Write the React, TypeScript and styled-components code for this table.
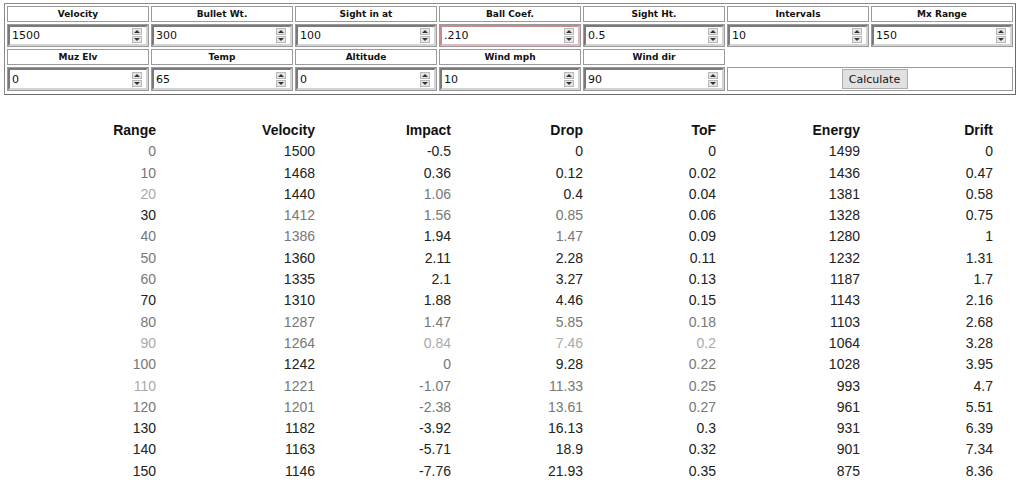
import React from "react";
import styled, { createGlobalStyle } from "styled-components";

const GlobalStyle = createGlobalStyle`
  body {
    margin: 0;
    background: #fff;
    font-family: "DejaVu Sans", Verdana, sans-serif;
  }
`;

const Page = styled.div`
  padding: 3px 0 0 4px;
`;

const FormTable = styled.div`
  width: 1006px;
  display: grid;
  grid-template-columns: repeat(7, 142px);
  grid-template-rows: 16px 23px 16px 24px;
  gap: 2px;
  padding: 2px 2px 3px 2px;
  border: 1px solid #8a8a8a;
  border-right-color: #6a6a6a;
  border-bottom-color: #6a6a6a;
`;

const HeadCell = styled.div<{ $empty?: boolean }>`
  box-sizing: border-box;
  border: 1px solid ${(p) => (p.$empty ? "transparent" : "#9a9a9a")};
  font-weight: bold;
  font-size: 9px;
  color: #111;
  display: flex;
  align-items: center;
  justify-content: center;
`;

const InputCell = styled.div`
  box-sizing: border-box;
  min-width: 0;
  border: 1px solid #9a9a9a;
  display: flex;
`;

const InputBox = styled.div<{ $invalid?: boolean }>`
  flex: 1;
  min-width: 0;
  display: flex;
  align-items: center;
  border: 2px solid;
  border-color: ${(p) =>
    p.$invalid ? "#c98a8f #e2b9bc #e2b9bc #c98a8f" : "#7a7a7a #d4d4d4 #d4d4d4 #7a7a7a"};
  background: #fff;
`;

const Field = styled.input`
  flex: 1;
  width: 0;
  min-width: 0;
  border: none;
  outline: none;
  padding: 0 0 0 2px;
  font-family: "DejaVu Sans", Verdana, sans-serif;
  font-size: 11px;
  color: #111;
  background: transparent;
`;

const Spinner = styled.div`
  width: 10px;
  height: 15px;
  margin-right: 4px;
  display: flex;
  flex-direction: column;
  gap: 1px;
`;

const SpinBtn = styled.div<{ $down?: boolean }>`
  flex: 1;
  background: #e6e6e6;
  border: 1px solid #b9b9b9;
  display: flex;
  align-items: center;
  justify-content: center;
  &::after {
    content: "";
    border-left: 3px solid transparent;
    border-right: 3px solid transparent;
    ${(p) => (p.$down ? "border-top: 3px solid #333;" : "border-bottom: 3px solid #333;")}
  }
`;

const ButtonCell = styled(InputCell)`
  grid-column: span 2;
  align-items: center;
  justify-content: center;
`;

const CalcButton = styled.button`
  font-family: "DejaVu Sans", Tahoma, sans-serif;
  font-size: 11px;
  color: #111;
  background: #e1e1e1;
  border: 1px solid #adadad;
  padding: 0 6px;
  height: 20px;
  width: 66px;
  margin-left: 9px;
`;

const Results = styled.div`
  margin: 25px 0 0 16px;
  display: grid;
  grid-template-columns: 136px 159px 136px 132px 133px 144px 133px;
  grid-auto-rows: 21.3px;
  font-family: "Liberation Sans", Arial, sans-serif;
  font-size: 14px;
`;

const Th = styled.div`
  text-align: right;
  font-weight: bold;
  color: #111;
  line-height: 21.3px;
`;

const Td = styled.div<{ $tone: string }>`
  text-align: right;
  line-height: 21.3px;
  color: ${(p) => (p.$tone === "l" ? "#aaa" : p.$tone === "g" ? "#777" : "#222")};
`;

type Input = { label: string; value: string; invalid?: boolean };

const row1: Input[] = [
  { label: "Velocity", value: "1500" },
  { label: "Bullet Wt.", value: "300" },
  { label: "Sight in at", value: "100" },
  { label: "Ball Coef.", value: ".210", invalid: true },
  { label: "Sight Ht.", value: "0.5" },
  { label: "Intervals", value: "10" },
  { label: "Mx Range", value: "150" },
];

const row2: Input[] = [
  { label: "Muz Elv", value: "0" },
  { label: "Temp", value: "65" },
  { label: "Altitude", value: "0" },
  { label: "Wind mph", value: "10" },
  { label: "Wind dir", value: "90" },
];

const headers = ["Range", "Velocity", "Impact", "Drop", "ToF", "Energy", "Drift"];

// values plus a tone mask (d = dark, g = grey, l = light) copied from the capture
const rows: [string[], string][] = [
  [["0", "1500", "-0.5", "0", "0", "1499", "0"], "gdddddd"],
  [["10", "1468", "0.36", "0.12", "0.02", "1436", "0.47"], "gdddddd"],
  [["20", "1440", "1.06", "0.4", "0.04", "1381", "0.58"], "ldgdddd"],
  [["30", "1412", "1.56", "0.85", "0.06", "1328", "0.75"], "dgggddd"],
  [["40", "1386", "1.94", "1.47", "0.09", "1280", "1"], "ggdgddd"],
  [["50", "1360", "2.11", "2.28", "0.11", "1232", "1.31"], "gdddddd"],
  [["60", "1335", "2.1", "3.27", "0.13", "1187", "1.7"], "gdddddd"],
  [["70", "1310", "1.88", "4.46", "0.15", "1143", "2.16"], "ddddddd"],
  [["80", "1287", "1.47", "5.85", "0.18", "1103", "2.68"], "gggggdd"],
  [["90", "1264", "0.84", "7.46", "0.2", "1064", "3.28"], "lgllldd"],
  [["100", "1242", "0", "9.28", "0.22", "1028", "3.95"], "gdgdgdd"],
  [["110", "1221", "-1.07", "11.33", "0.25", "993", "4.7"], "lggggdd"],
  [["120", "1201", "-2.38", "13.61", "0.27", "961", "5.51"], "gggggdd"],
  [["130", "1182", "-3.92", "16.13", "0.3", "931", "6.39"], "ddddddd"],
  [["140", "1163", "-5.71", "18.9", "0.32", "901", "7.34"], "ddddddd"],
  [["150", "1146", "-7.76", "21.93", "0.35", "875", "8.36"], "ddddddd"],
];

const NumberInput: React.FC<{ item: Input }> = ({ item }) => (
  <InputCell>
    <InputBox $invalid={item.invalid}>
      <Field defaultValue={item.value} />
      <Spinner>
        <SpinBtn />
        <SpinBtn $down />
      </Spinner>
    </InputBox>
  </InputCell>
);

const App: React.FC = () => {
  return (
    <Page>
      <GlobalStyle />
      <FormTable>
        {row1.map((item) => (
          <HeadCell key={item.label}>{item.label}</HeadCell>
        ))}
        {row1.map((item) => (
          <NumberInput key={item.label} item={item} />
        ))}
        {row2.map((item) => (
          <HeadCell key={item.label}>{item.label}</HeadCell>
        ))}
        <HeadCell $empty style={{ gridColumn: "span 2" }} />
        {row2.map((item) => (
          <NumberInput key={item.label} item={item} />
        ))}
        <ButtonCell>
          <CalcButton>Calculate</CalcButton>
        </ButtonCell>
      </FormTable>
      <Results>
        {headers.map((h) => (
          <Th key={h}>{h}</Th>
        ))}
        {rows.map(([vals, mask]) =>
          vals.map((v, i) => (
            <Td key={vals[0] + "-" + i} $tone={mask[i]}>
              {v}
            </Td>
          ))
        )}
      </Results>
    </Page>
  );
};

export default App;
